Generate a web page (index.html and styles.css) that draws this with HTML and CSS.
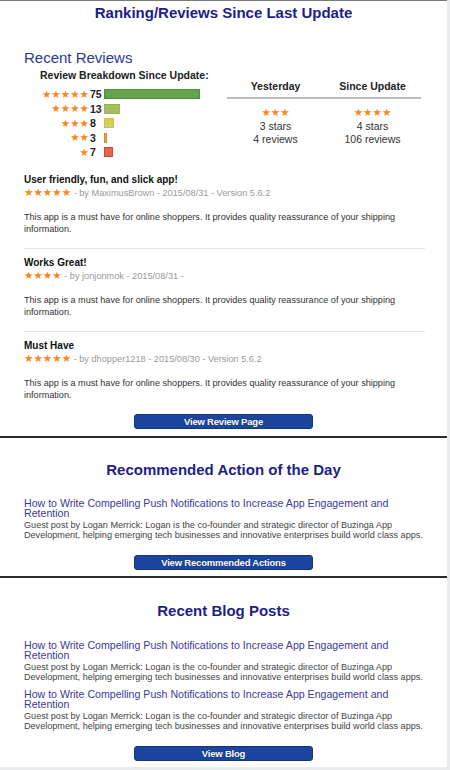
FILE: index.html
```html
<!DOCTYPE html>
<html>
<head>
<meta charset="utf-8">
<link rel="stylesheet" href="styles.css">
</head>
<body>
<div class="page">
  <section class="section sec-reviews">
    <h1 class="sec-title first">Ranking/Reviews Since Last Update</h1>
    <h2 class="sub-title">Recent Reviews</h2>
    <div class="summary">
      <div class="breakdown">
        <div class="bd-head">Review Breakdown Since Update:</div>
        <div class="bd-grid">
          <span class="bd-stars">★★★★★</span><span class="bd-num">75</span><span class="bd-barcell"><span class="bar b5" style="width:96px"></span></span>
          <span class="bd-stars">★★★★</span><span class="bd-num">13</span><span class="bd-barcell"><span class="bar b4" style="width:16px"></span></span>
          <span class="bd-stars">★★★</span><span class="bd-num">8</span><span class="bd-barcell"><span class="bar b3" style="width:10px"></span></span>
          <span class="bd-stars">★★</span><span class="bd-num">3</span><span class="bd-barcell"><span class="bar b2" style="width:3px"></span></span>
          <span class="bd-stars">★</span><span class="bd-num">7</span><span class="bd-barcell"><span class="bar b1" style="width:9px"></span></span>
        </div>
      </div>
      <div class="stats">
        <div class="stats-head">
          <div class="stats-col">Yesterday</div>
          <div class="stats-col">Since Update</div>
        </div>
        <div class="stats-body">
          <div class="stats-col">
            <div class="stats-stars">★★★</div>
            <div>3 stars</div>
            <div>4 reviews</div>
          </div>
          <div class="stats-col">
            <div class="stats-stars">★★★★</div>
            <div>4 stars</div>
            <div>106 reviews</div>
          </div>
        </div>
      </div>
    </div>

    <div class="review first-review">
      <div class="rv-title">User friendly, fun, and slick app!</div>
      <div class="rv-meta"><span class="stars">★★★★★</span> - by MaximusBrown - 2015/08/31 - Version 5.6.2</div>
      <div class="rv-body">This app is a must have for online shoppers. It provides quality reassurance of your shipping information.</div>
    </div>
    <div class="review">
      <div class="rv-title">Works Great!</div>
      <div class="rv-meta"><span class="stars">★★★★</span> - by jonjonmok - 2015/08/31 -</div>
      <div class="rv-body">This app is a must have for online shoppers. It provides quality reassurance of your shipping information.</div>
    </div>
    <div class="review last">
      <div class="rv-title">Must Have</div>
      <div class="rv-meta"><span class="stars">★★★★★</span> - by dhopper1218 - 2015/08/30 - Version 5.6.2</div>
      <div class="rv-body">This app is a must have for online shoppers. It provides quality reassurance of your shipping information.</div>
    </div>
    <div class="btn-row"><a class="btn">View Review Page</a></div>
  </section>

  <section class="section sec-action">
    <h1 class="sec-title">Recommended Action of the Day</h1>
    <div class="post first-post">
      <a class="post-link">How to Write Compelling Push Notifications to Increase App Engagement and Retention</a>
      <div class="post-desc">Guest post by Logan Merrick: Logan is the co-founder and strategic director of Buzinga App Development, helping emerging tech businesses and innovative enterprises build world class apps.</div>
    </div>
    <div class="btn-row"><a class="btn">View Recommended Actions</a></div>
  </section>

  <section class="section sec-blog">
    <h1 class="sec-title">Recent Blog Posts</h1>
    <div class="post first-post">
      <a class="post-link">How to Write Compelling Push Notifications to Increase App Engagement and Retention</a>
      <div class="post-desc">Guest post by Logan Merrick: Logan is the co-founder and strategic director of Buzinga App Development, helping emerging tech businesses and innovative enterprises build world class apps.</div>
    </div>
    <div class="post">
      <a class="post-link">How to Write Compelling Push Notifications to Increase App Engagement and Retention</a>
      <div class="post-desc">Guest post by Logan Merrick: Logan is the co-founder and strategic director of Buzinga App Development, helping emerging tech businesses and innovative enterprises build world class apps.</div>
    </div>
    <div class="btn-row"><a class="btn">View Blog</a></div>
  </section>
</div>
</body>
</html>
```

FILE: styles.css
```css
html, body {
  margin: 0;
  padding: 0;
}
body {
  background: #e9edf0;
  font-family: "Liberation Sans", Arial, Helvetica, sans-serif;
  color: #222;
  height: 770px;
  overflow: hidden;
}
.page {
  width: 447px;
  background: #fff;
  border-top: 1px solid #7a7a7a;
}
.section {
  border-bottom: 2px solid #2b2b2b;
}
.sec-blog {
  border-bottom: none;
  padding-bottom: 6px;
}
.sec-title {
  margin: 0;
  font-size: 15px;
  line-height: 18px;
  font-weight: bold;
  text-align: center;
  color: #1e1e86;
}
.sec-title.first {
  padding-top: 3px;
}
.sec-action .sec-title {
  padding-top: 23px;
}
.sec-blog .sec-title {
  padding-top: 24px;
}
.sub-title {
  margin: 27px 0 0 24px;
  font-size: 15px;
  line-height: 18px;
  font-weight: normal;
  color: #2a3a8e;
}

/* summary */
.summary {
  display: flex;
  margin-top: 2px;
}
.breakdown {
  margin-left: 40px;
  width: 187px;
}
.bd-head {
  font-size: 10.5px;
  line-height: 13px;
  font-weight: bold;
  color: #222;
}
.bd-grid {
  margin-top: 5px;
  display: grid;
  grid-template-columns: 49px 14px 1fr;
  grid-auto-rows: 14.5px;
  align-items: center;
  font-size: 10.5px;
  font-weight: bold;
}
.bd-stars {
  text-align: right;
  color: #f5891f;
  font-family: "DejaVu Sans", sans-serif;
  font-size: 10.5px;
  line-height: 13px;
  font-weight: normal;
}
.bd-num {
  color: #222;
  padding-left: 1px;
}
.bd-barcell {
  display: flex;
  align-items: center;
  padding-left: 1px;
}
.bar {
  display: block;
  height: 10px;
  box-sizing: border-box;
}
.b5 { background: #67a251; border: 1px solid #4e8f3a; }
.b4 { background: #a7bd5f; border: 1px solid #98b64e; }
.b3 { background: #d7cd60; border: 1px solid #cfc24c; }
.b2 { background: #e2a246; border: 1px solid #d68f2a; }
.b1 { background: #e2654f; border: 1px solid #d24a36; }

.stats {
  width: 194px;
  padding-top: 11px;
  font-size: 10.5px;
  line-height: 13px;
}
.stats-head {
  display: flex;
  font-weight: bold;
  color: #222;
  border-bottom: 2px solid #bdbdbd;
  padding-bottom: 4px;
}
.stats-col {
  flex: 1;
  text-align: center;
}
.stats-body {
  display: flex;
  padding-top: 5px;
  color: #333;
}
.stats-stars {
  color: #f5891f;
  font-family: "DejaVu Sans", sans-serif;
  font-size: 10.5px;
  line-height: 16px;
  height: 16px;
}

/* reviews */
.review {
  margin: 0 22px 0 24px;
  padding: 7px 0 13px;
  border-bottom: 1px solid #e6e6e6;
}
.review.first-review {
  padding-top: 13px;
}
.review.last {
  border-bottom: none;
  padding-bottom: 0;
}
.rv-title {
  font-size: 10px;
  line-height: 14px;
  font-weight: bold;
  color: #111;
}
.rv-meta {
  font-size: 9.2px;
  line-height: 13px;
  height: 13px;
  color: #9a9a9a;
}
.stars {
  color: #f5891f;
  font-family: "DejaVu Sans", sans-serif;
  font-size: 10.5px;
  line-height: 1;
}
.rv-body {
  margin-top: 11px;
  font-size: 9.1px;
  line-height: 12px;
  color: #333;
}

/* buttons */
.btn-row {
  display: flex;
  justify-content: center;
  padding: 13px 0 7px;
}
.sec-action .btn-row {
  padding-top: 15px;
  padding-bottom: 6px;
}
.sec-blog .btn-row {
  padding-top: 15px;
  padding-bottom: 0;
}
.btn {
  display: block;
  width: 179px;
  height: 15px;
  box-sizing: border-box;
  background: #1b459f;
  border: 1px solid #12357f;
  border-radius: 3px;
  color: #fff;
  font-size: 9.5px;
  line-height: 13px;
  font-weight: bold;
  text-align: center;
  text-shadow: 0 0 1px #0a1f55;
  letter-spacing: -0.2px;
}

/* posts */
.post {
  margin: 7px 24px 0 24px;
}
.post.first-post {
  margin-top: 19px;
}
.sec-blog .post.first-post {
  margin-top: 20px;
}
.post-link {
  display: block;
  font-size: 10.6px;
  line-height: 10px;
  color: #3a3a9c;
}
.post-desc {
  margin-top: 2px;
  font-size: 9.1px;
  line-height: 10px;
  color: #444;
}
```
